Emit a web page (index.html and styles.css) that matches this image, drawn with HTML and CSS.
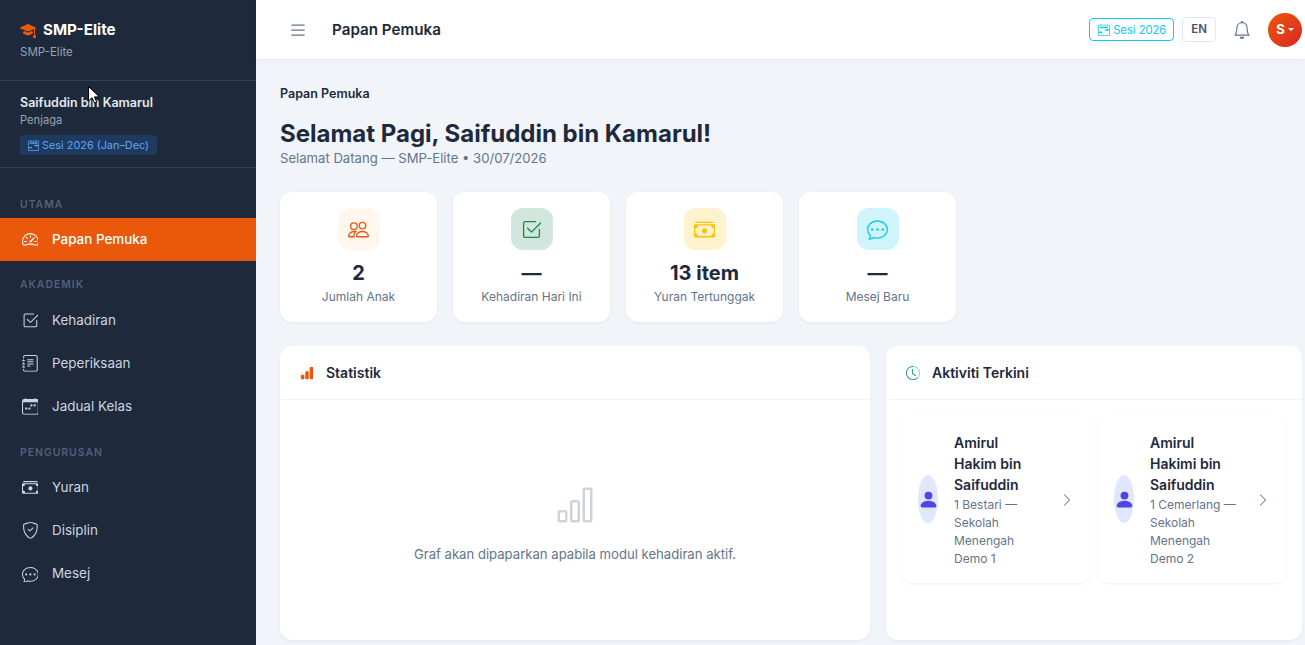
FILE: index.html
```html
<!DOCTYPE html>
<html lang="ms">
<head>
  <meta charset="utf-8">
  <title>Papan Pemuka</title>
  <link rel="stylesheet" href="styles.css">
</head>
<body>

<svg class="sprite" xmlns="http://www.w3.org/2000/svg">
  <symbol id="i-mortar" viewBox="0 0 16 16"><path d="M8.211 2.047a.5.5 0 0 0-.422 0l-7.5 3.5a.5.5 0 0 0 .025.917l7.5 3a.5.5 0 0 0 .372 0L14 7.14V13a1 1 0 0 0-1 1v2h3v-2a1 1 0 0 0-1-1V6.739l.686-.275a.5.5 0 0 0 .025-.917z"/><path d="M4.176 9.032a.5.5 0 0 0-.656.327l-.5 1.7a.5.5 0 0 0 .294.605l4.5 1.8a.5.5 0 0 0 .372 0l4.5-1.8a.5.5 0 0 0 .294-.605l-.5-1.7a.5.5 0 0 0-.656-.327L8 10.466z"/></symbol>
  <symbol id="i-range" viewBox="0 0 16 16"><path d="M3.5 0a.5.5 0 0 1 .5.5V1h8V.5a.5.5 0 0 1 1 0V1h1a2 2 0 0 1 2 2v11a2 2 0 0 1-2 2H2a2 2 0 0 1-2-2V3a2 2 0 0 1 2-2h1V.5a.5.5 0 0 1 .5-.5M2 2a1 1 0 0 0-1 1v11a1 1 0 0 0 1 1h12a1 1 0 0 0 1-1V3a1 1 0 0 0-1-1z"/><path d="M2.5 4a.5.5 0 0 1 .5-.5h10a.5.5 0 0 1 .5.5v1a.5.5 0 0 1-.5.5H3a.5.5 0 0 1-.5-.5zM9 8a1 1 0 0 1 1-1h5v2h-5a1 1 0 0 1-1-1m-8 2h4a1 1 0 1 1 0 2H1z"/></symbol>
  <symbol id="i-speed" viewBox="0 0 16 16"><path d="M8 4a.5.5 0 0 1 .5.5V6a.5.5 0 0 1-1 0V4.5A.5.5 0 0 1 8 4M3.732 5.732a.5.5 0 0 1 .707 0l.915.914a.5.5 0 1 1-.708.708l-.914-.915a.5.5 0 0 1 0-.707M2 10a.5.5 0 0 1 .5-.5h1.586a.5.5 0 0 1 0 1H2.5A.5.5 0 0 1 2 10m9.5 0a.5.5 0 0 1 .5-.5h1.5a.5.5 0 0 1 0 1H12a.5.5 0 0 1-.5-.5m.754-4.246a.39.39 0 0 0-.527-.02L7.547 9.31a.91.91 0 1 0 1.302 1.258l3.434-4.297a.39.39 0 0 0-.029-.518z"/><path fill-rule="evenodd" d="M0 10a8 8 0 1 1 15.547 2.661c-.442 1.253-1.845 1.602-2.932 1.25C11.309 13.488 9.475 13 8 13c-1.474 0-3.31.488-4.615.911-1.087.352-2.49.003-2.932-1.25A8 8 0 0 1 0 10m8-7a7 7 0 0 0-6.603 9.329c.203.575.923.876 1.68.63C4.397 12.533 6.358 12 8 12s3.604.532 4.923.96c.757.245 1.477-.056 1.68-.631A7 7 0 0 0 8 3"/></symbol>
  <symbol id="i-check" viewBox="0 0 16 16"><path d="M3 14.5A1.5 1.5 0 0 1 1.5 13V3A1.5 1.5 0 0 1 3 1.5h8a.5.5 0 0 1 0 1H3a.5.5 0 0 0-.5.5v10a.5.5 0 0 0 .5.5h10a.5.5 0 0 0 .5-.5V8a.5.5 0 0 1 1 0v5a1.5 1.5 0 0 1-1.5 1.5z"/><path d="m8.354 10.354 7-7a.5.5 0 0 0-.708-.708L8 9.293 5.354 6.646a.5.5 0 1 0-.708.708l3 3a.5.5 0 0 0 .708 0"/></symbol>
  <symbol id="i-journal" viewBox="0 0 16 16"><path d="M5 10.5a.5.5 0 0 1 .5-.5h2a.5.5 0 0 1 0 1h-2a.5.5 0 0 1-.5-.5m0-2a.5.5 0 0 1 .5-.5h5a.5.5 0 0 1 0 1h-5a.5.5 0 0 1-.5-.5m0-2a.5.5 0 0 1 .5-.5h5a.5.5 0 0 1 0 1h-5a.5.5 0 0 1-.5-.5m0-2a.5.5 0 0 1 .5-.5h5a.5.5 0 0 1 0 1h-5a.5.5 0 0 1-.5-.5"/><path d="M3 0h10a2 2 0 0 1 2 2v12a2 2 0 0 1-2 2H3a2 2 0 0 1-2-2v-1h1v1a1 1 0 0 0 1 1h10a1 1 0 0 0 1-1V2a1 1 0 0 0-1-1H3a1 1 0 0 0-1 1v1H1V2a2 2 0 0 1 2-2"/><path d="M1 5v-.5a.5.5 0 0 1 1 0V5h.5a.5.5 0 0 1 0 1h-2a.5.5 0 0 1 0-1zm0 3v-.5a.5.5 0 0 1 1 0V8h.5a.5.5 0 0 1 0 1h-2a.5.5 0 0 1 0-1zm0 3v-.5a.5.5 0 0 1 1 0v.5h.5a.5.5 0 0 1 0 1h-2a.5.5 0 0 1 0-1z"/></symbol>
  <symbol id="i-week" viewBox="0 0 16 16"><path d="M11 6.5a.5.5 0 0 1 .5-.5h1a.5.5 0 0 1 .5.5v1a.5.5 0 0 1-.5.5h-1a.5.5 0 0 1-.5-.5zm-3 0a.5.5 0 0 1 .5-.5h1a.5.5 0 0 1 .5.5v1a.5.5 0 0 1-.5.5h-1a.5.5 0 0 1-.5-.5zm-5 3a.5.5 0 0 1 .5-.5h1a.5.5 0 0 1 .5.5v1a.5.5 0 0 1-.5.5h-1a.5.5 0 0 1-.5-.5zm3 0a.5.5 0 0 1 .5-.5h1a.5.5 0 0 1 .5.5v1a.5.5 0 0 1-.5.5h-1a.5.5 0 0 1-.5-.5z"/><path d="M3.5 0a.5.5 0 0 1 .5.5V1h8V.5a.5.5 0 0 1 1 0V1h1a2 2 0 0 1 2 2v11a2 2 0 0 1-2 2H2a2 2 0 0 1-2-2V3a2 2 0 0 1 2-2h1V.5a.5.5 0 0 1 .5-.5M1 4v10a1 1 0 0 0 1 1h12a1 1 0 0 0 1-1V4z"/></symbol>
  <symbol id="i-cash" viewBox="0 0 16 16"><path d="M1 3a1 1 0 0 1 1-1h12a1 1 0 0 1 1 1zm7 8a2 2 0 1 0 0-4 2 2 0 0 0 0 4"/><path d="M0 5a1 1 0 0 1 1-1h14a1 1 0 0 1 1 1v8a1 1 0 0 1-1 1H1a1 1 0 0 1-1-1zm3 0a2 2 0 0 1-2 2v4a2 2 0 0 1 2 2h10a2 2 0 0 1 2-2V7a2 2 0 0 1-2-2z"/></symbol>
  <symbol id="i-shield" viewBox="0 0 16 16"><path d="M5.338 1.59a61 61 0 0 0-2.837.856.48.48 0 0 0-.328.39c-.554 4.157.726 7.19 2.253 9.188a10.7 10.7 0 0 0 2.287 2.233c.346.244.652.42.893.533q.18.085.293.118a1 1 0 0 0 .101.025 1 1 0 0 0 .1-.025q.114-.034.294-.118c.24-.113.547-.29.893-.533a10.7 10.7 0 0 0 2.287-2.233c1.527-1.997 2.807-5.031 2.253-9.188a.48.48 0 0 0-.328-.39c-.651-.213-1.75-.56-2.837-.855C9.552 1.29 8.531 1.067 8 1.067c-.53 0-1.552.223-2.662.524zM5.072.56C6.157.265 7.31 0 8 0s1.843.265 2.928.56c1.11.3 2.229.655 2.887.87a1.54 1.54 0 0 1 1.044 1.262c.596 4.477-.787 7.795-2.465 9.99a11.8 11.8 0 0 1-2.517 2.453 7 7 0 0 1-1.048.625c-.28.132-.581.24-.829.24s-.548-.108-.829-.24a7 7 0 0 1-1.048-.625 11.8 11.8 0 0 1-2.517-2.453C1.928 10.487.545 7.169 1.141 2.692A1.54 1.54 0 0 1 2.185 1.43 63 63 0 0 1 5.072.56"/><path d="M10.854 5.146a.5.5 0 0 1 0 .708l-3 3a.5.5 0 0 1-.708 0l-1.5-1.5a.5.5 0 1 1 .708-.708L7.5 7.793l2.646-2.647a.5.5 0 0 1 .708 0"/></symbol>
  <symbol id="i-chat" viewBox="0 0 16 16"><path d="M5 8a1 1 0 1 1-2 0 1 1 0 0 1 2 0m4 0a1 1 0 1 1-2 0 1 1 0 0 1 2 0m3 1a1 1 0 1 0 0-2 1 1 0 0 0 0 2"/><path d="m2.165 15.803.02-.004c1.83-.363 2.948-.842 3.468-1.105A9 9 0 0 0 8 15c4.418 0 8-3.134 8-7s-3.582-7-8-7-8 3.134-8 7c0 1.76.743 3.37 1.97 4.6a10.4 10.4 0 0 1-.524 2.318l-.003.011a11 11 0 0 1-.244.637c-.079.186.074.394.273.362a22 22 0 0 0 .693-.125m.8-3.108a1 1 0 0 0-.287-.801C1.618 10.83 1 9.468 1 8c0-3.192 3.004-6 7-6s7 2.808 7 6-3.004 6-7 6a8 8 0 0 1-2.088-.272 1 1 0 0 0-.711.074c-.387.196-1.24.57-2.634.893a11 11 0 0 0 .398-2"/></symbol>
  <symbol id="i-list" viewBox="0 0 16 16"><path fill-rule="evenodd" d="M2.5 12a.5.5 0 0 1 .5-.5h10a.5.5 0 0 1 0 1H3a.5.5 0 0 1-.5-.5m0-4a.5.5 0 0 1 .5-.5h10a.5.5 0 0 1 0 1H3a.5.5 0 0 1-.5-.5m0-4a.5.5 0 0 1 .5-.5h10a.5.5 0 0 1 0 1H3a.5.5 0 0 1-.5-.5"/></symbol>
  <symbol id="i-bell" viewBox="0 0 16 16"><path d="M8 16a2 2 0 0 0 2-2H6a2 2 0 0 0 2 2M8 1.918l-.797.161A4 4 0 0 0 4 6c0 .628-.134 2.197-.459 3.742-.16.767-.376 1.566-.663 2.258h10.244c-.287-.692-.502-1.49-.663-2.258C12.134 8.197 12 6.628 12 6a4 4 0 0 0-3.203-3.92zM14.22 12c.223.447.481.801.78 1H1c.299-.199.557-.553.78-1C2.68 10.2 3 6.88 3 6c0-2.42 1.72-4.44 4.005-4.901a1 1 0 1 1 1.99 0A5 5 0 0 1 13 6c0 .88.32 4.2 1.22 6"/></symbol>
  <symbol id="i-people" viewBox="0 0 16 16"><path d="M15 14s1 0 1-1-1-4-5-4-5 3-5 4 1 1 1 1zm-7.978-1L7 12.996c.001-.264.167-1.03.76-1.72C8.312 10.629 9.282 10 11 10c1.717 0 2.687.63 3.24 1.276.593.69.758 1.457.76 1.72l-.008.002-.014.002zM11 7a2 2 0 1 0 0-4 2 2 0 0 0 0 4m3-2a3 3 0 1 1-6 0 3 3 0 0 1 6 0M6.936 9.28a6 6 0 0 0-1.23-.247A7 7 0 0 0 5 9c-4 0-5 3-5 4q0 1 1 1h4.216A2.24 2.24 0 0 1 5 13c0-1.01.377-2.042 1.09-2.904.243-.294.526-.569.846-.816M4.92 10A5.5 5.5 0 0 0 4 13H1c0-.26.164-1.03.76-1.724.545-.636 1.492-1.256 3.16-1.275ZM1.5 5.5a3 3 0 1 1 6 0 3 3 0 0 1-6 0m3-2a2 2 0 1 0 0 4 2 2 0 0 0 0-4"/></symbol>
  <symbol id="i-barfill" viewBox="0 0 16 16"><path d="M1 11a1 1 0 0 1 1-1h2a1 1 0 0 1 1 1v3a1 1 0 0 1-1 1H2a1 1 0 0 1-1-1zm5-4a1 1 0 0 1 1-1h2a1 1 0 0 1 1 1v7a1 1 0 0 1-1 1H7a1 1 0 0 1-1-1zm5-5a1 1 0 0 1 1-1h2a1 1 0 0 1 1 1v12a1 1 0 0 1-1 1h-2a1 1 0 0 1-1-1z"/></symbol>
  <symbol id="i-bar" viewBox="0 0 16 16"><path d="M4 11H2v3h2zm5-4H7v7h2zm5-5v12h-2V2zm-2-1a1 1 0 0 0-1 1v12a1 1 0 0 0 1 1h2a1 1 0 0 0 1-1V2a1 1 0 0 0-1-1zM6 7a1 1 0 0 1 1-1h2a1 1 0 0 1 1 1v7a1 1 0 0 1-1 1H7a1 1 0 0 1-1-1zm-5 4a1 1 0 0 1 1-1h2a1 1 0 0 1 1 1v3a1 1 0 0 1-1 1H2a1 1 0 0 1-1-1z"/></symbol>
  <symbol id="i-clock" viewBox="0 0 16 16"><path d="M8.515 1.019A7 7 0 0 0 8 1V0a8 8 0 0 1 .589.022zm2.004.45a7 7 0 0 0-.985-.299l.219-.976q.576.129 1.126.342zm1.37.71a7 7 0 0 0-.439-.27l.493-.87a8 8 0 0 1 .979.654l-.615.789a7 7 0 0 0-.418-.302zm1.834 1.79a7 7 0 0 0-.653-.796l.724-.69q.406.429.747.91zm.744 1.352a7 7 0 0 0-.214-.468l.893-.45a8 8 0 0 1 .45 1.088l-.95.313a7 7 0 0 0-.179-.483m.53 2.507a7 7 0 0 0-.1-1.025l.985-.17q.1.58.116 1.17zm-.131 1.538q.05-.254.081-.51l.993.123a8 8 0 0 1-.23 1.155l-.964-.267q.069-.247.12-.501m-.952 2.379q.276-.436.486-.908l.914.405q-.24.54-.555 1.038zm-.964 1.205q.183-.183.35-.378l.758.653a8 8 0 0 1-.401.432z"/><path d="M8 1a7 7 0 1 0 4.95 11.95l.707.707A8.001 8.001 0 1 1 8 0z"/><path d="M7.5 3a.5.5 0 0 1 .5.5v5.21l3.248 1.856a.5.5 0 0 1-.496.868l-3.5-2A.5.5 0 0 1 7 9V3.5a.5.5 0 0 1 .5-.5"/></symbol>
  <symbol id="i-person" viewBox="0 0 16 16"><path d="M3 14s-1 0-1-1 1-4 6-4 6 3 6 4-1 1-1 1zm5-6a3 3 0 1 0 0-6 3 3 0 0 0 0 6"/></symbol>
  <symbol id="i-right" viewBox="0 0 16 16"><path fill-rule="evenodd" d="M4.646 1.646a.5.5 0 0 1 .708 0l6 6a.5.5 0 0 1 0 .708l-6 6a.5.5 0 0 1-.708-.708L10.293 8 4.646 2.354a.5.5 0 0 1 0-.708"/></symbol>
</svg>

<div class="wrap">
  <aside class="sidebar">
    <div class="brand">
      <div class="brand_name"><svg class="ic brand_icon"><use href="#i-mortar"/></svg>SMP-Elite</div>
      <div class="brand_sub">SMP-Elite</div>
    </div>
    <div class="user">
      <div class="user_name">Saifuddin bin Kamarul</div>
      <div class="user_role">Penjaga</div>
      <span class="user_sesi"><svg class="ic"><use href="#i-range"/></svg>Sesi 2026 (Jan–Dec)</span>
    </div>
    <nav class="nav">
      <div class="nav_title">UTAMA</div>
      <a class="nav_item active"><svg class="ic"><use href="#i-speed"/></svg>Papan Pemuka</a>
      <div class="nav_title">AKADEMIK</div>
      <a class="nav_item"><svg class="ic"><use href="#i-check"/></svg>Kehadiran</a>
      <a class="nav_item"><svg class="ic"><use href="#i-journal"/></svg>Peperiksaan</a>
      <a class="nav_item"><svg class="ic"><use href="#i-week"/></svg>Jadual Kelas</a>
      <div class="nav_title">PENGURUSAN</div>
      <a class="nav_item"><svg class="ic"><use href="#i-cash"/></svg>Yuran</a>
      <a class="nav_item"><svg class="ic"><use href="#i-shield"/></svg>Disiplin</a>
      <a class="nav_item"><svg class="ic"><use href="#i-chat"/></svg>Mesej</a>
    </nav>
  </aside>

  <div class="main">
    <header class="topbar">
      <svg class="ic menu_btn"><use href="#i-list"/></svg>
      <div class="topbar_title">Papan Pemuka</div>
      <div class="topbar_right">
        <span class="sesi_btn"><svg class="ic"><use href="#i-range"/></svg>Sesi 2026</span>
        <span class="lang_btn">EN</span>
        <svg class="ic bell"><use href="#i-bell"/></svg>
        <span class="avatar">S<span class="caret"></span></span>
      </div>
    </header>

    <main class="content">
      <div class="crumb">Papan Pemuka</div>
      <h1 class="greet">Selamat Pagi, Saifuddin bin Kamarul!</h1>
      <div class="greet_sub">Selamat Datang — SMP-Elite • 30/07/2026</div>

      <div class="stats">
        <div class="stat">
          <div class="stat_icon orange"><svg class="ic"><use href="#i-people"/></svg></div>
          <div class="stat_value">2</div>
          <div class="stat_label">Jumlah Anak</div>
        </div>
        <div class="stat">
          <div class="stat_icon green"><svg class="ic"><use href="#i-check"/></svg></div>
          <div class="stat_value">—</div>
          <div class="stat_label">Kehadiran Hari Ini</div>
        </div>
        <div class="stat">
          <div class="stat_icon yellow"><svg class="ic"><use href="#i-cash"/></svg></div>
          <div class="stat_value">13 item</div>
          <div class="stat_label">Yuran Tertunggak</div>
        </div>
        <div class="stat">
          <div class="stat_icon cyan"><svg class="ic"><use href="#i-chat"/></svg></div>
          <div class="stat_value">—</div>
          <div class="stat_label">Mesej Baru</div>
        </div>
      </div>

      <div class="panels">
        <section class="panel">
          <div class="panel_head"><svg class="ic head_bar"><use href="#i-barfill"/></svg>Statistik</div>
          <div class="empty">
            <svg class="ic empty_icon"><use href="#i-bar"/></svg>
            <p>Graf akan dipaparkan apabila modul kehadiran aktif.</p>
          </div>
        </section>
        <section class="panel">
          <div class="panel_head"><svg class="ic head_clock"><use href="#i-clock"/></svg>Aktiviti Terkini</div>
          <div class="kids">
            <div class="kid">
              <div class="kid_avatar"><svg class="ic"><use href="#i-person"/></svg></div>
              <div class="kid_text">
                <div class="kid_name">Amirul Hakim bin Saifuddin</div>
                <div class="kid_class">1 Bestari — Sekolah Menengah Demo 1</div>
              </div>
              <svg class="ic kid_go"><use href="#i-right"/></svg>
            </div>
            <div class="kid">
              <div class="kid_avatar"><svg class="ic"><use href="#i-person"/></svg></div>
              <div class="kid_text">
                <div class="kid_name">Amirul Hakimi bin Saifuddin</div>
                <div class="kid_class">1 Cemerlang — Sekolah Menengah Demo 2</div>
              </div>
              <svg class="ic kid_go"><use href="#i-right"/></svg>
            </div>
          </div>
        </section>
      </div>
    </main>
  </div>
</div>

<svg class="pointer" viewBox="0 0 12 18"><path d="M.5.5v14.5l3.6-3.3 2.4 5.4 2.3-1-2.4-5.2h5z" fill="#fff" stroke="#000"/></svg>

</body>
</html>
```
FILE: styles.css
```css
*{
  box-sizing: border-box;
}
html, body{
  height: 100%;
}
body{
  margin: 0;
  overflow: hidden;
  font-family: Inter, "Noto Sans", sans-serif;
  font-size: 14px;
  line-height: 1.5;
  color: #1e293b;
  background: #f1f5f9;
}
.sprite{
  display: none;
}
.ic{
  display: block;
  width: 16px;
  height: 16px;
  fill: currentColor;
  flex-shrink: 0;
}
.wrap{
  display: flex;
  height: 100%;
}

/* sidebar */
.sidebar{
  width: 256px;
  flex-shrink: 0;
  background: #1e293b;
  color: #fff;
}
.brand{
  height: 81px;
  padding: 20px 20px 0;
  border-bottom: 1px solid #334155;
}
.brand_name{
  display: flex;
  align-items: center;
  gap: 7px;
  font-size: 15.2px;
  font-weight: 700;
  line-height: 20px;
}
.brand_icon{
  color: #ea580c;
}
.brand_sub{
  margin-top: 4px;
  font-size: 11.52px;
  color: #94a3b8;
}
.user{
  height: 87px;
  padding: 13px 20px 0;
  border-bottom: 1px solid #334155;
}
.user_name{
  font-size: 12.5px;
  font-weight: 600;
  line-height: 18px;
  color: #e2e8f0;
}
.user_role{
  font-size: 11.2px;
  line-height: 17px;
  color: #94a3b8;
}
.user_sesi{
  display: inline-flex;
  align-items: center;
  gap: 3px;
  height: 20px;
  margin-top: 6px;
  padding: 0 8px;
  border-radius: 4px;
  background: #1e3a5f;
  color: #60a5fa;
  font-size: 10.88px;
}
.user_sesi .ic{
  width: 11px;
  height: 11px;
}
.nav{
  padding-top: 13px;
}
.nav_title{
  padding: 17px 20px 6px;
  font-size: 10.4px;
  font-weight: 600;
  line-height: 14px;
  letter-spacing: 1px;
  color: #526079;
}
.nav_item{
  display: flex;
  align-items: center;
  gap: 13.6px;
  padding: 11.2px 20px 11.2px 21.6px;
  font-size: 13.44px;
  line-height: 21px;
  color: #cbd5e1;
}
.nav_item .ic{
  width: 16.8px;
  height: 16.8px;
}
.nav_item.active{
  background: #ea580c;
  color: #fff;
  font-weight: 500;
}

/* topbar */
.main{
  flex: 1;
  min-width: 0;
}
.topbar{
  display: flex;
  align-items: center;
  height: 59px;
  padding: 0 3px 0 32px;
  background: #fff;
  box-shadow: 0 1px 0 #e8edf3, 0 2px 4px rgba(0,0,0,.04);
}
.menu_btn{
  width: 20px;
  height: 20px;
  color: #64748b;
}
.topbar_title{
  margin-left: 24px;
  padding-top: 1px;
  font-size: 15.2px;
  font-weight: 600;
}
.topbar_right{
  display: flex;
  align-items: center;
  margin-left: auto;
}
.sesi_btn{
  display: flex;
  align-items: center;
  gap: 3px;
  height: 23px;
  padding: 1px 7px 0 8px;
  border: 1px solid #0dcaf0;
  border-radius: 4px;
  color: #0dcaf0;
  font-size: 11.2px;
}
.sesi_btn .ic{
  width: 12px;
  height: 12px;
}
.lang_btn{
  display: block;
  height: 25px;
  margin-left: 8px;
  padding: 0 8px;
  border: 1px solid #e2e8f0;
  border-radius: 4px;
  color: #475569;
  font-size: 11.5px;
  font-weight: 600;
  line-height: 23px;
}
.bell{
  width: 18px;
  height: 18px;
  margin: 0 17px;
  color: #64748b;
}
.avatar{
  display: flex;
  align-items: center;
  justify-content: center;
  width: 34px;
  height: 34px;
  border-radius: 50%;
  background: linear-gradient(135deg, #ea580c, #dc2626);
  color: #fff;
  font-size: 13px;
  font-weight: 700;
}
.caret{
  margin-left: 3px;
  border-top: 3.5px solid #fff;
  border-left: 3.5px solid transparent;
  border-right: 3.5px solid transparent;
}

/* content */
.content{
  padding: 25px 3px 0 24px;
}
.crumb{
  font-size: 12.5px;
  font-weight: 600;
  line-height: 19px;
}
.greet{
  margin: 15px 0 0;
  font-size: 24px;
  font-weight: 700;
  line-height: 32px;
}
.greet_sub{
  font-size: 13.12px;
  line-height: 16px;
  color: #64748b;
}
.stats{
  display: flex;
  gap: 16px;
  margin-top: 26px;
}
.stat{
  width: 157px;
  height: 130px;
  padding-top: 16px;
  text-align: center;
  background: #fff;
  border-radius: 12px;
  box-shadow: 0 1px 3px rgba(0,0,0,.06);
}
.stat_icon{
  display: flex;
  align-items: center;
  justify-content: center;
  width: 42px;
  height: 42px;
  margin: 0 auto 8px;
  border-radius: 12px;
}
.stat_icon .ic{
  width: 21px;
  height: 21px;
}
.orange{
  background: #fff7ed;
  color: #ea580c;
}
.green{
  background: #d1e7dd;
  color: #198754;
}
.yellow{
  background: #fff3cd;
  color: #ffc107;
}
.cyan{
  background: #cff4fc;
  color: #0dcaf0;
}
.stat_value{
  font-size: 20px;
  font-weight: 700;
  line-height: 30px;
}
.stat_label{
  font-size: 12px;
  line-height: 18px;
  color: #64748b;
}
.panels{
  display: grid;
  grid-template-columns: 590fr 416fr;
  gap: 16px;
  margin-top: 24px;
}
.panel{
  height: 294px;
  background: #fff;
  border-radius: 12px;
  box-shadow: 0 1px 3px rgba(0,0,0,.06);
}
.panel_head{
  display: flex;
  align-items: center;
  gap: 12px;
  height: 54px;
  padding: 0 20px;
  font-size: 14px;
  font-weight: 600;
  border-bottom: 1px solid #f1f5f9;
}
.head_bar{
  width: 14px;
  height: 14px;
  color: #ea580c;
}
.head_clock{
  width: 14px;
  height: 14px;
  color: #0f9d78;
}
.empty{
  padding-top: 85px;
  text-align: center;
  color: #64748b;
  font-size: 13.12px;
}
.empty_icon{
  width: 40px;
  height: 40px;
  margin: 0 auto;
  color: #cfd4da;
}
.empty p{
  margin: 20px 0 0;
}
.kids{
  display: grid;
  grid-template-columns: 1fr 1fr;
  gap: 8px;
  padding: 16px;
}
.kid{
  display: flex;
  align-items: center;
  gap: 16px;
  padding: 16px;
  background: #fff;
  border-radius: 10px;
  box-shadow: 0 1px 3px rgba(0,0,0,.06);
}
.kid_avatar{
  display: flex;
  align-items: center;
  justify-content: center;
  width: 20px;
  height: 48px;
  margin-top: -1px;
  flex-shrink: 0;
  border-radius: 50%;
  background: #e0e7ff;
  color: #4f46e5;
}
.kid_avatar .ic{
  width: 21px;
  height: 21px;
}
.kid_text{
  flex: 1;
  min-width: 0;
}
.kid_name{
  font-size: 14px;
  font-weight: 600;
  line-height: 21px;
}
.kid_class{
  font-size: 12px;
  line-height: 18px;
  margin-top: 1px;
  margin-bottom: -1px;
  color: #64748b;
}
.kid_go{
  width: 14px;
  height: 14px;
  color: #64748b;
}

/* mouse pointer caught in the screenshot */
.pointer{
  position: absolute;
  left: 88px;
  top: 86px;
  width: 12px;
  height: 18px;
}
```
